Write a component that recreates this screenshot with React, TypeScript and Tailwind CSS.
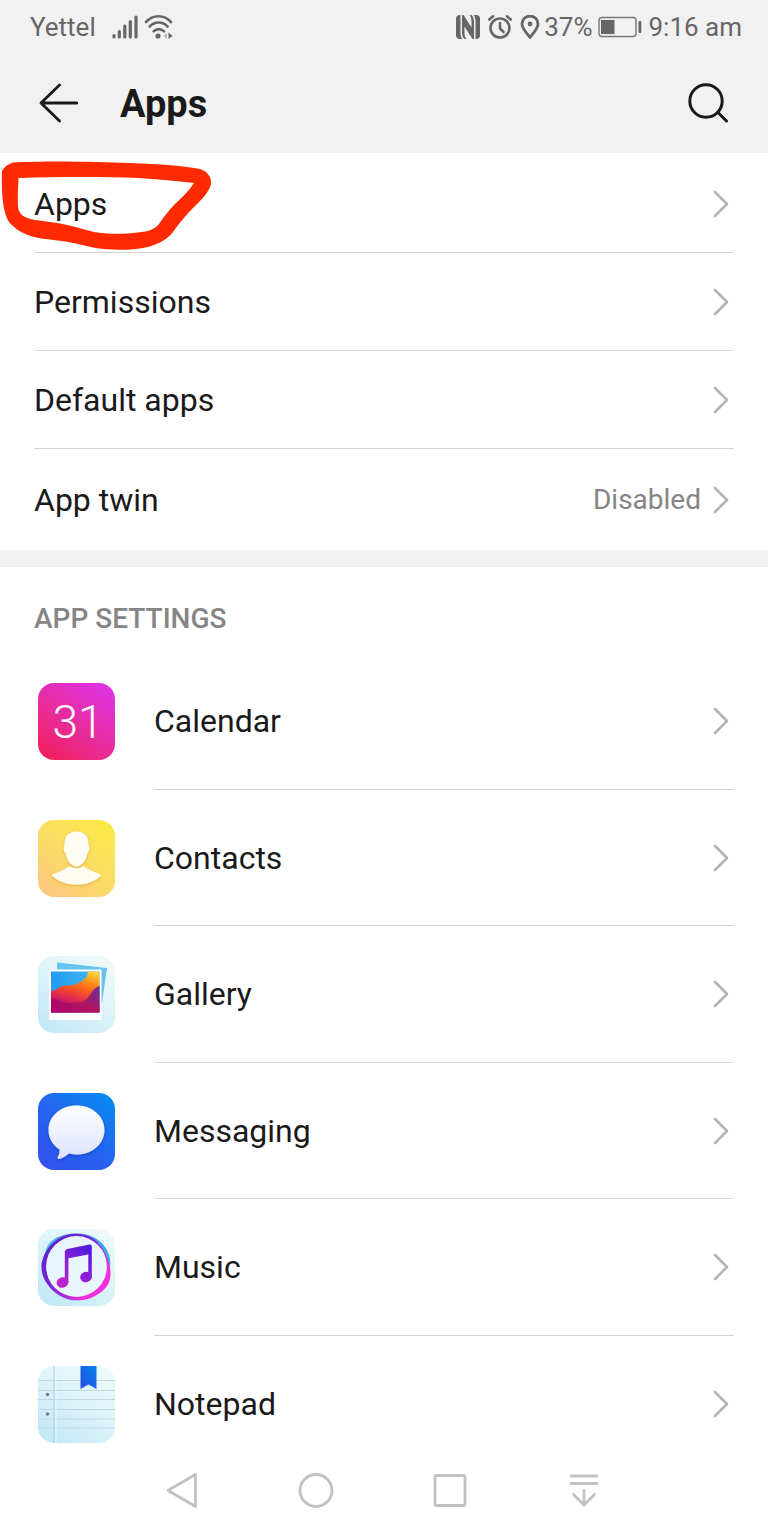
import type { ReactNode } from "react";

const Chevron = () => (
  <svg className="mr-[5px] h-7 w-4 shrink-0" viewBox="0 0 16 28" fill="none" stroke="#b3b3b3" strokeWidth="2.6" strokeLinecap="round" strokeLinejoin="round" aria-hidden="true">
    <path d="M2 2 14 14 2 26" />
  </svg>
);

const SignalIcon = () => (
  <svg className="h-6 w-[26px]" viewBox="0 0 26 24" stroke="#666" strokeWidth="3.2" strokeLinecap="round" aria-hidden="true">
    <path d="M2 20.5V22M7.3 16.5V22M12.8 11V22M18.3 6.5V22M24 2V22" />
  </svg>
);

const WifiIcon = () => (
  <svg className="h-6 w-[30px]" viewBox="0 0 30 24" fill="none" stroke="#666" strokeWidth="2.6" strokeLinecap="round" aria-hidden="true">
    <path d="M2 7C9-.6 20-.6 27 7M5.6 11.6c5-5.4 13-5.4 18 0M9.6 16.4c3-3 7.4-3 10.4 0" />
    <circle cx="14" cy="21" r="2.6" fill="#666" stroke="none" />
    <path d="M23 18v6l-3.5-3z" fill="#bbb" stroke="none" />
    <path d="M24.5 17.5v6.500l4-3z" fill="#666" stroke="none" />
  </svg>
);

const NfcIcon = () => (
  <svg className="h-6 w-6" viewBox="0 0 24 24" aria-hidden="true">
    <path fill="#666" d="M4 0H4.500V19Q4.500 22 6.500 24H4Q0 24 0 20V4Q0 0 4 0Z" />
    <path fill="#666" d="M20 0H17.500Q19.500 2 19.500 5V24H20Q24 24 24 20V4Q24 0 20 0Z" />
    <path fill="#666" d="M6 0H7.500L15.500 12.500V5.500Q15.500 2 13.500 0H15.500Q18 2 18 5.500V24H16.500L8.500 11.500V18.500Q8.500 22 10.500 24H8.500Q6 22 6 18.500Z" />
  </svg>
);

const AlarmIcon = () => (
  <svg className="h-6 w-6" viewBox="0 0 24 24" fill="none" stroke="#666" strokeWidth="2.6" strokeLinecap="round" strokeLinejoin="round" aria-hidden="true">
    <circle cx="12" cy="13" r="9.5" />
    <path d="M12 8v5.500l3.500 3.500M1.300 4.500 5 1.300M22.700 4.500 19 1.300" />
  </svg>
);

const PinIcon = () => (
  <svg className="h-6 w-5" viewBox="0 0 20 24" fill="none" stroke="#666" strokeWidth="2.8" strokeLinejoin="round" aria-hidden="true">
    <path d="M10 22.500C7 18.500 2 13.500 2 9a8 8 0 0 1 16 0c0 4.500-5 9.500-8 13.500Z" />
    <circle cx="10" cy="9" r="2.4" fill="#666" stroke="none" />
  </svg>
);

const BatteryIcon = () => (
  <svg className="h-[22px] w-11" viewBox="0 0 44 22" aria-hidden="true">
    <rect x="1" y="1.500" width="37" height="19" rx="3" fill="none" stroke="#777" strokeWidth="1.400" />
    <rect x="3" y="4" width="13.500" height="14" fill="#666" />
    <rect x="40.500" y="5" width="2.800" height="12" rx="1" fill="#666" />
  </svg>
);

const CalendarIcon = () => (
  <svg className="size-[77px]" viewBox="0 0 77 77" aria-hidden="true">
    <defs>
      <linearGradient id="cal" x1="0.150" y1="1" x2="0.850" y2="0">
        <stop offset="0" stopColor="#f0205c" />
        <stop offset="0.450" stopColor="#e82c9c" />
        <stop offset="1" stopColor="#de32e6" />
      </linearGradient>
    </defs>
    <rect width="77" height="77" rx="16" fill="url(#cal)" />
    <text x="40" y="55" textAnchor="middle" fontFamily="Roboto, sans-serif" fontWeight="300" fontSize="46" fill="#fff">31</text>
  </svg>
);

const ContactsIcon = () => (
  <svg className="size-[77px]" viewBox="0 0 77 77" aria-hidden="true">
    <defs>
      <linearGradient id="con" x1="0.100" y1="1" x2="0.850" y2="0">
        <stop offset="0" stopColor="#fdc782" />
        <stop offset="0.500" stopColor="#fbdc65" />
        <stop offset="1" stopColor="#f9ea46" />
      </linearGradient>
      <filter id="conShadow" x="-20%" y="-20%" width="140%" height="140%">
        <feDropShadow dx="0" dy="1" stdDeviation="1.800" floodColor="#e0a020" floodOpacity="0.700" />
      </filter>
    </defs>
    <rect width="77" height="77" rx="16" fill="url(#con)" />
    <g fill="#fffdf3" filter="url(#conShadow)">
      <path d="M38.500 11.500c8.500 0 12.500 5.500 12 14 1.500 1.500 1 6-1 7.500-1.500 8-6 13.500-11 13.500S29 41 27.500 33c-2-1.500-2.500-6-1-7.500-.5-8.500 3.500-14 12-14Z" />
      <path d="M13.500 55c5-2.500 12-4.500 18-9 4 3 10 3 14 0 6 4.500 13 6.500 18 9-12 13-38 13-50 0Z" />
    </g>
  </svg>
);

const PaleGradient = ({ id }: { id: string }) => (
  <linearGradient id={id} x1="0.150" y1="1" x2="0.850" y2="0">
    <stop offset="0" stopColor="#c2e8f7" />
    <stop offset="0.600" stopColor="#e0f4fa" />
    <stop offset="1" stopColor="#eefaf9" />
  </linearGradient>
);

const GalleryIcon = () => (
  <svg className="size-[77px]" viewBox="0 0 77 77" aria-hidden="true">
    <defs>
      <PaleGradient id="gal" />
      <linearGradient id="galSky" x1="0" y1="0" x2="1" y2="0">
        <stop offset="0" stopColor="#229bef" />
        <stop offset="1" stopColor="#47baf0" />
      </linearGradient>
      <linearGradient id="galHill" x1="0.800" y1="0" x2="0.450" y2="1">
        <stop offset="0" stopColor="#ffd23a" />
        <stop offset="0.200" stopColor="#ff9a20" />
        <stop offset="0.450" stopColor="#ff5a1e" />
        <stop offset="0.700" stopColor="#e02a50" />
        <stop offset="1" stopColor="#a00478" />
      </linearGradient>
      <linearGradient id="galLow" x1="0" y1="1" x2="1" y2="0">
        <stop offset="0" stopColor="#b00070" />
        <stop offset="0.500" stopColor="#b01560" />
        <stop offset="1" stopColor="#6430a4" />
      </linearGradient>
    </defs>
    <rect width="77" height="77" rx="16" fill="url(#gal)" />
    <path d="M19 6.500 69 12 64 47H20Z" fill="#67c3ef" />
    <path d="M11 13.500H63.500V64H11Z" fill="#fff" />
    <path d="M13 15.500H61.500V56.500H13Z" fill="url(#galSky)" />
    <path d="M13 35c5 0 7-4 12-5 6-1 11 0 17-4 5-3 8-5 8-10.500h11.500v41H13Z" fill="url(#galHill)" />
    <path d="M13 43c8-1 12 5 20 4s12 0 16-4c4-5 6-11 12.500-13v26.500H13Z" fill="url(#galLow)" />
  </svg>
);

const MessagingIcon = () => (
  <svg className="size-[77px]" viewBox="0 0 77 77" aria-hidden="true">
    <defs>
      <linearGradient id="msg" x1="0.100" y1="1" x2="0.900" y2="0">
        <stop offset="0" stopColor="#3350ed" />
        <stop offset="0.500" stopColor="#2465ef" />
        <stop offset="1" stopColor="#0689ee" />
      </linearGradient>
      <linearGradient id="msgBubble" x1="0" y1="0" x2="0" y2="1">
        <stop offset="0" stopColor="#fff" />
        <stop offset="1" stopColor="#dbe2fc" />
      </linearGradient>
      <filter id="msgShadow" x="-20%" y="-20%" width="140%" height="140%">
        <feDropShadow dx="0" dy="1.500" stdDeviation="1.500" floodColor="#123ab5" floodOpacity="0.600" />
      </filter>
    </defs>
    <rect width="77" height="77" rx="16" fill="url(#msg)" />
    <path filter="url(#msgShadow)" fill="url(#msgBubble)" d="M38.500 12.500C54 12.500 66.500 23 66.500 37S54 61.500 39 61.500c-3 0-5.500-.5-8-1-3 2.500-6 4.500-9.500 5.500-2 .5-2.500-1-1.500-2.500 1.500-2 1.500-4.500 1.500-7C14.500 52 10.500 45 10.500 37 10.500 23 23 12.500 38.500 12.500Z" />
  </svg>
);

const MusicIcon = () => (
  <svg className="size-[77px]" viewBox="0 0 77 77" aria-hidden="true">
    <defs>
      <PaleGradient id="mus" />
      <linearGradient id="musRing" x1="0" y1="0.100" x2="1" y2="0.900">
        <stop offset="0" stopColor="#5820c9" />
        <stop offset="0.450" stopColor="#7a27da" />
        <stop offset="0.800" stopColor="#f22fd9" />
      </linearGradient>
      <linearGradient id="musRing2" x1="0" y1="0.600" x2="1" y2="0.400">
        <stop offset="0" stopColor="#45cfe8" />
        <stop offset="0.550" stopColor="#4a86e6" />
        <stop offset="1" stopColor="#36b0e8" />
      </linearGradient>
      <linearGradient id="musNote" gradientUnits="userSpaceOnUse" x1="20" y1="58" x2="54" y2="18">
        <stop offset="0" stopColor="#c925c9" />
        <stop offset="0.500" stopColor="#8a1fd6" />
        <stop offset="1" stopColor="#4b18e0" />
      </linearGradient>
    </defs>
    <rect width="77" height="77" rx="16" fill="url(#mus)" />
    <path fill="url(#musRing2)" d="M8 20C12 9 24 5 38 4.500C55 4 69 14 72 30C74 41 66 54 57 64C48 73 30 74 20 65C12 57 4 34 8 20Z" />
    <path fill="url(#musRing)" d="M3.500 38C3.500 24 16 7 34 5C48 4 58 9 64 19C70 27 74 40 72 50C70 60 58 69 45 71C30 73 17 66 10 56C6 51 3.500 45 3.500 38Z" />
    <circle cx="38.500" cy="37.500" r="30.400" fill="#e8f5fc" />
    <g fill="url(#musNote)">
      <path d="M26.800 23Q26.800 20.500 29.200 20L51.500 15.600Q53.800 15.200 53.800 17.500V48H50.300V25.600L30.400 29.200V54H26.800Z" />
      <ellipse cx="24.500" cy="53.500" rx="6" ry="5.200" transform="rotate(-15 24.500 53.500)" />
      <ellipse cx="48" cy="48" rx="5.900" ry="5.200" transform="rotate(-15 48 48)" />
    </g>
  </svg>
);

const NotepadIcon = () => (
  <svg className="size-[77px]" viewBox="0 0 77 77" aria-hidden="true">
    <defs>
      <PaleGradient id="note" />
      <linearGradient id="noteMark" x1="0" y1="1" x2="1" y2="0">
        <stop offset="0" stopColor="#2350e8" />
        <stop offset="1" stopColor="#087fe8" />
      </linearGradient>
    </defs>
    <rect width="77" height="77" rx="16" fill="url(#note)" />
    <path d="M0 14.500H77M0 24.500H77M0 33.500H77M0 43.500H77M0 53H77M0 62H77" stroke="#bfd9e3" strokeWidth="1" />
    <path d="M16 0V77" stroke="#b4d2dd" strokeWidth="1" />
    <path d="M18 0V77" stroke="#e9f8fb" strokeWidth="1" />
    <circle cx="9.500" cy="28.500" r="1.800" fill="#6c838c" />
    <circle cx="9.500" cy="48" r="1.800" fill="#6c838c" />
    <path d="M42.500 0H58.500V23L50.500 18.500 42.500 23Z" fill="url(#noteMark)" />
  </svg>
);

const settings: { label: string; value?: string }[] = [
  { label: "Apps" },
  { label: "Permissions" },
  { label: "Default apps" },
  { label: "App twin", value: "Disabled" },
];

const apps: { label: string; icon: ReactNode }[] = [
  { label: "Calendar", icon: <CalendarIcon /> },
  { label: "Contacts", icon: <ContactsIcon /> },
  { label: "Gallery", icon: <GalleryIcon /> },
  { label: "Messaging", icon: <MessagingIcon /> },
  { label: "Music", icon: <MusicIcon /> },
  { label: "Notepad", icon: <NotepadIcon /> },
];

export default function App() {
  return (
    <div className="relative min-h-screen bg-white font-[Roboto,sans-serif] text-[#1a1a1a]">
      <header className="bg-[#f1f1f1]">
        <div className="flex h-[52px] items-center pt-0.5 pr-[26px] pl-[30px] text-[26px] leading-8 text-[#666]">
          <span>Yettel</span>
          <span className="ml-4 flex items-center gap-1.5">
            <SignalIcon />
            <WifiIcon />
          </span>
          <span className="ml-auto flex items-center gap-1.5">
            <span className="flex items-center gap-1">
              <span className="flex items-center gap-2">
                <NfcIcon />
                <AlarmIcon />
                <PinIcon />
              </span>
              <span>37%</span>
            </span>
            <BatteryIcon />
            <span>9:16 am</span>
          </span>
        </div>
        <div className="flex h-[101px] items-center pr-10 pl-[38px]">
          <button type="button" aria-label="Back" className="h-10 w-10">
            <svg className="size-10" viewBox="0 0 40 40" fill="none" stroke="#1a1a1a" strokeWidth="2.800" strokeLinecap="round" strokeLinejoin="round">
              <path d="M21.500 2 3 20 21.500 38M3 20H39" />
            </svg>
          </button>
          <h1 className="ml-[42px] pt-[3px] text-[38px] leading-11 font-bold">Apps</h1>
          <button type="button" aria-label="Search" className="ml-auto h-10 w-[42px]">
            <svg className="h-10 w-[42px]" viewBox="0 0 42 40" fill="none" stroke="#1a1a1a" strokeWidth="3" strokeLinecap="round">
              <circle cx="20" cy="18" r="16.200" />
              <path d="M32 29.500 40.500 38" />
            </svg>
          </button>
        </div>
      </header>

      <main>
        <ul className="px-[34px] pt-0.5">
          {settings.map((s) => (
            <li key={s.label} className="border-b border-[#d4d4d4] last:border-b-0">
              <button type="button" className={`flex w-full items-center text-left ${s.value ? "h-[101px]" : "h-[97px]"}`}>
                <span className="text-[32px] leading-10">{s.label}</span>
                <span className="ml-auto flex items-center gap-3">
                  {s.value && <span className="text-[28px] leading-8 text-[#858585]">{s.value}</span>}
                  <Chevron />
                </span>
              </button>
            </li>
          ))}
        </ul>

        <section className="border-t-[17px] border-[#f1f1f1]">
          <h2 className="flex h-[86px] items-center px-[34px] pt-[18px] text-[28px] leading-8 font-medium text-[#858585]">APP SETTINGS</h2>
          <ul>
            {apps.map((a) => (
              <li key={a.label} className="group">
                <button type="button" className="flex w-full items-center pr-[34px] pl-[38px] text-left">
                  {a.icon}
                  <span className="ml-[39px] flex h-[137px] flex-1 items-center justify-between border-b border-[#d4d4d4] group-last:border-b-0 group-even:h-[136px]">
                    <span className="text-[32px] leading-10">{a.label}</span>
                    <Chevron />
                  </span>
                </button>
              </li>
            ))}
          </ul>
        </section>
      </main>

      <nav aria-label="System navigation" className="flex h-[62px] items-start justify-between pt-px pr-[166px] pl-[164px] text-[#c2c2c2]">
        <button type="button" aria-label="Back">
          <svg className="size-9" viewBox="0 0 36 36" fill="none" stroke="currentColor" strokeWidth="2.800" strokeLinejoin="round">
            <path d="M31.500 1.500V33.500L4 17.500Z" />
          </svg>
        </button>
        <button type="button" aria-label="Home">
          <svg className="size-9" viewBox="0 0 36 36" fill="none" stroke="currentColor" strokeWidth="2.800">
            <circle cx="18" cy="17.500" r="16" />
          </svg>
        </button>
        <button type="button" aria-label="Recent apps">
          <svg className="size-9" viewBox="0 0 36 36" fill="none" stroke="currentColor" strokeWidth="2.800">
            <rect x="3" y="2.500" width="30" height="30" rx="1.500" />
          </svg>
        </button>
        <button type="button" aria-label="Show notifications">
          <svg className="size-9" viewBox="0 0 36 36" fill="none" stroke="currentColor" strokeWidth="2.800" strokeLinecap="round" strokeLinejoin="round">
            <path d="M5 3H31M5 10.500H31M18 17.500V32M7.500 21.500 18 32 28.500 21.500" />
          </svg>
        </button>
      </nav>

      <svg className="pointer-events-none absolute top-[156px] left-0 h-[96px] w-[216px]" viewBox="0 156 216 96" aria-hidden="true">
        <path
          fill="#ff2a00"
          fillRule="evenodd"
          d="M13 162.500C45 160.500 95 161.500 130 163C160 164 185 166 200 169C207 171 212 177 211 184C209 192 203 198 196 205C187 214 180 222 173 232C166 241 155 246 140 248.500C125 250.500 108 250 93 247.500C78 244 66 241 50 239.500C32 238 18 233 9 222C2 211 1.500 188 2 171C4 167 8 164 13 162.500ZM18.500 178C18 193 17 205 19 211C22 218 32 220 43 221C62 223 80 228 94 232C108 234.500 124 234 138 232.500C149 231.500 155 229 159 224C163 218 168 211 175 204C182 197 189 191 194 183C176 181 158 179 138 178C98 176.500 55 177 18.500 178Z"
        />
      </svg>
    </div>
  );
}
